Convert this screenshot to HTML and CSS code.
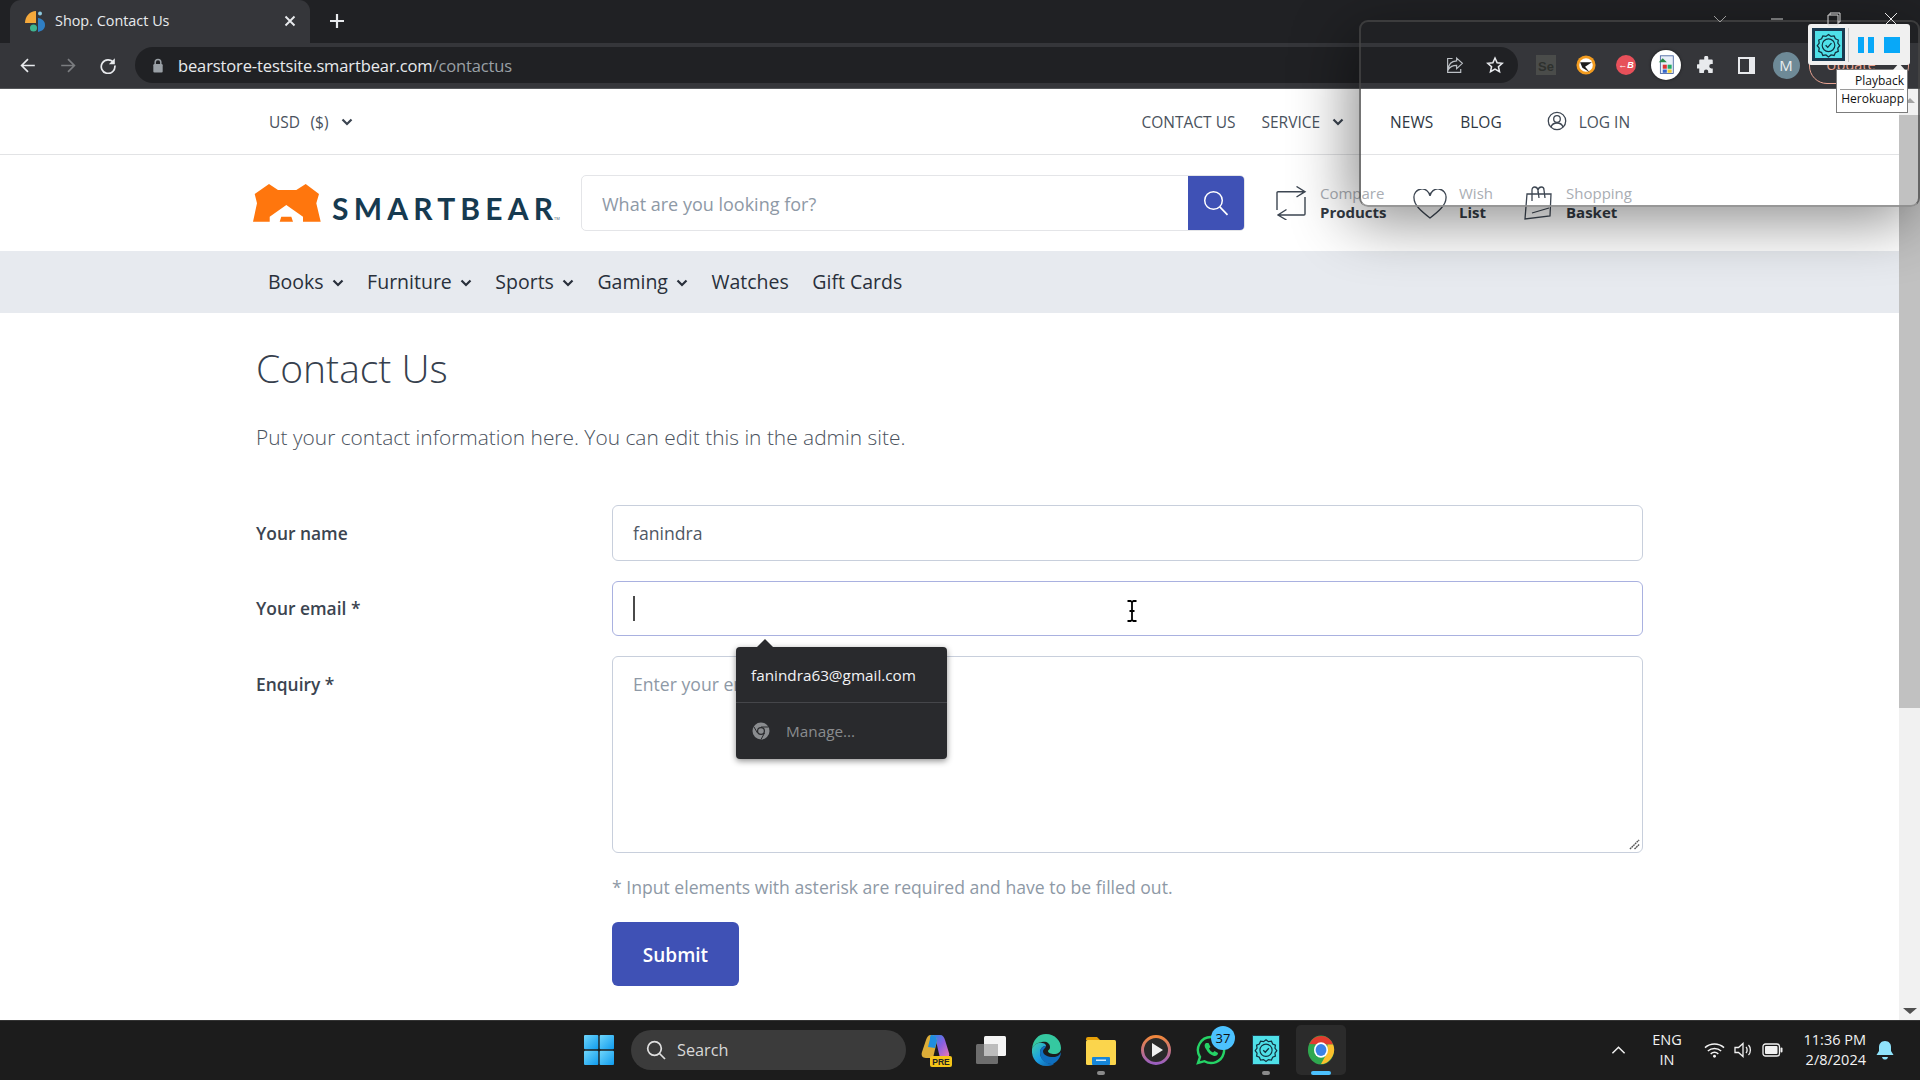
FILE: index.html
```html
<!DOCTYPE html>
<html lang="en">
<head>
<meta charset="utf-8">
<title>Shop. Contact Us</title>
<link rel="stylesheet" href="styles.css">
</head>
<body>
<svg class="defs" width="0" height="0" aria-hidden="true">
  <symbol id="chev" viewBox="0 0 12 8"><path d="M1.500 1.500 6 6l4.500-4.500" fill="none" stroke="currentColor" stroke-width="2.200"/></symbol>
  <symbol id="badge" viewBox="0 0 32 32">
    <path d="M16 3.500l3 2.300 3.700-.6 1.500 3.400 3.400 1.500-.6 3.700 2.300 3-2.300 3 .6 3.700-3.400 1.500-1.500 3.400-3.700-.6-3 2.300-3-2.300-3.700.6-1.500-3.400-3.400-1.500.6-3.700-2.300-3 2.300-3-.6-3.700 3.400-1.500 1.500-3.400 3.700.6z" fill="none" stroke="#12313f" stroke-width="1.500"/>
    <circle cx="16" cy="16.300" r="7.500" fill="none" stroke="#12313f" stroke-width="1.400"/>
    <path d="M12.600 16.300l2.500 2.500 4.400-5" fill="none" stroke="#12313f" stroke-width="1.600"/>
  </symbol>
</svg>
<div class="screen">
  <div class="tabstrip">
    <div class="tab">
      <svg class="favicon" viewBox="0 0 20 22"><path d="M0 13C0 6 5 1 11 1v12z" fill="#f5a93b"/><path d="M13 8c4 .5 7 3 7 7s-3 6-7 7z" fill="#2f7fc4"/><circle cx="8.500" cy="18" r="3.500" fill="#3fb58f"/><circle cx="15" cy="3.500" r="2" fill="#8ecbe0"/></svg>
      <span class="tab-title">Shop. Contact Us</span>
      <svg class="tab-x" viewBox="0 0 12 12"><path d="M1.500 1.500l9 9m0-9l-9 9" stroke="#e8eaed" stroke-width="1.900"/></svg>
    </div>
    <svg class="tab-plus" viewBox="0 0 16 16"><path d="M8 1v14M1 8h14" stroke="#e8eaed" stroke-width="2.200"/></svg>
  </div>
  <div class="toolbar">
    <svg class="tb-btn" viewBox="0 0 20 20"><path d="M18 10H3M10 2.500 2.500 10l7.500 7.500" fill="none" stroke="#e8eaed" stroke-width="2"/></svg>
    <svg class="tb-btn" viewBox="0 0 20 20"><path d="M2 10h15M10 2.500 17.500 10 10 17.500" fill="none" stroke="#7b7d80" stroke-width="2"/></svg>
    <svg class="tb-btn" viewBox="0 0 20 20"><path d="M16.500 6.500A8 8 0 1 0 18 10" fill="none" stroke="#e8eaed" stroke-width="2"/><path d="M18 1.500v7h-7z" fill="#e8eaed"/></svg>
    <div class="omnibox">
      <svg class="lock" viewBox="0 0 12 16"><path d="M3 7V4.500a3 3 0 0 1 6 0V7" fill="none" stroke="#9aa0a6" stroke-width="1.600"/><rect x="1" y="6.500" width="10" height="9" rx="1.200" fill="#9aa0a6"/></svg>
      <span class="url">bearstore-testsite.smartbear.com<span class="url-path">/contactus</span></span>
      <svg class="omni-icon" viewBox="0 0 22 22"><path d="M13 2.500l7 6.500-7 6.500v-4c-5 0-8 1.500-10 5 0-6 3-10 10-10.500zM8 3H2v17h16v-4" fill="none" stroke="#bdc1c6" stroke-width="1.400"/></svg>
      <svg class="omni-icon star" viewBox="0 0 22 22"><path d="M11 2.500l2.600 5.700 6.200.7-4.600 4.200 1.300 6.100-5.500-3.100-5.500 3.100 1.300-6.100-4.600-4.200 6.200-.7z" fill="none" stroke="#e8eaed" stroke-width="1.900"/></svg>
    </div>
    <div class="ext-slot ext-first"><div class="ext-se">Se</div></div>
    <div class="ext-slot"><svg class="ext-round" viewBox="0 0 22 22"><circle cx="11" cy="11" r="10.500" fill="#f39c1f"/><circle cx="11" cy="11" r="7.500" fill="#fff"/><path d="M4.500 8h13L10 13l5 6-8-5z" fill="#1d1d1d"/></svg></div>
    <div class="ext-slot"><div class="ext-red">&#8592;B</div></div>
    <div class="ext-slot"><div class="ext-white"><svg viewBox="0 0 22 26" width="18" height="21"><rect x="4" y="1" width="16" height="22" fill="#e8eef8" stroke="#3c5a9a"/><rect x="7" y="12" width="5" height="5" fill="#d33"/><rect x="13" y="12" width="5" height="5" fill="#2a6"/><rect x="7" y="18" width="5" height="4" fill="#36c"/><rect x="13" y="18" width="5" height="4" fill="#ec3"/><path d="M2 9l5-5 5 5z" fill="#2a8a4a"/></svg></div></div>
    <div class="ext-slot"><svg class="puzzle" viewBox="0 0 20 20"><path d="M8 1.500a2.300 2.300 0 0 1 4.500 0V4h4a1 1 0 0 1 1 1v4h-1.500a2.400 2.400 0 0 0 0 4.800h1.500V18a1 1 0 0 1-1 1h-4v-1.500a2.400 2.400 0 0 0-4.800 0V19H3.500a1 1 0 0 1-1-1v-4H1a2.400 2.400 0 0 1 0-4.800h1.500V5a1 1 0 0 1 1-1H8z" fill="#e8eaed"/></svg></div>
    <div class="ext-slot"><div class="sidepanel"></div></div>
    <div class="ext-slot"><div class="avatar">M</div></div>
    <div class="update-pill">Update</div>
  </div>
  <div class="page">
    <div class="page-main">
      <div class="topbar">
        <span class="top-link usd">USD &nbsp;($)</span>
        <svg class="chev-s"><use href="#chev"/></svg>
        <span class="top-link contact">CONTACT US</span>
        <span class="top-link service">SERVICE</span>
        <svg class="chev-s"><use href="#chev"/></svg>
        <span class="top-strong news">NEWS</span>
        <span class="top-strong blog">BLOG</span>
        <svg class="user-icon" viewBox="0 0 20 20"><circle cx="10" cy="10" r="8.700" fill="none" stroke="#3d4652" stroke-width="1.300"/><circle cx="10" cy="8" r="3.300" fill="none" stroke="#3d4652" stroke-width="1.300"/><path d="M4 16c1-3 3-4 6-4s5 1 6 4" fill="none" stroke="#3d4652" stroke-width="1.300"/></svg>
        <span class="top-link">LOG IN</span>
      </div>
      <div class="header">
        <div class="logo">
          <svg class="bear" viewBox="0 0 68 38"><path d="M0 37.700 4 19.300 1.700 10 16 0l9 6h18.300l9.400-6L66 10l-2.700 9.300 4.400 18.400H50v-5L33.300 21 16.700 32.700v5z" fill="#ff760d"/><path d="M26.700 37.700l1.600-5h10l1.700 5z" fill="#ff760d"/></svg>
          <span class="logo-text">SMARTBEA<span class="logo-last">R</span></span><span class="logo-tm">TM</span>
        </div>
        <div class="search">
          <span class="search-ph">What are you looking for?</span>
          <div class="search-btn"><svg viewBox="0 0 26 26" width="26" height="26"><circle cx="10.500" cy="10.500" r="8.800" fill="none" stroke="#fff" stroke-width="1.500"/><path d="M16.800 16.800l7.700 8" stroke="#fff" stroke-width="1.700"/></svg></div>
        </div>
        <div class="hitem compare">
          <svg class="hicon-c" viewBox="0 0 31 34"><path d="M29 5.700H2a1 1 0 0 0-1 1V24M2 29h26a1 1 0 0 0 1-1V11M20.500 .5l8.500 5.200-8.500 5.300M10.500 23.500 2 29l8.500 5" fill="none" stroke="#3d4652" stroke-width="1.400"/></svg>
          <div class="htext"><span class="hlight">Compare</span><span class="hbold">Products</span></div>
        </div>
        <div class="hitem wish">
          <svg class="hicon-w" viewBox="0 0 34 30"><path d="M17 29C8 22 1 16 1 9a7.800 7.800 0 0 1 16-2 7.800 7.800 0 0 1 16 2c0 7-7 13-16 20z" fill="none" stroke="#3d4652" stroke-width="1.300"/></svg>
          <div class="htext"><span class="hlight">Wish</span><span class="hbold">List</span></div>
        </div>
        <div class="hitem basket">
          <svg class="hicon-b" viewBox="0 0 28 34"><path d="M3 8h24l-1 22L1 33zM8 15V4c0-4 5-4 6 0l1 8M14 7V4c1-4 6-4 6 0l1 8M8 27l17-5" fill="none" stroke="#3d4652" stroke-width="1.300"/></svg>
          <div class="htext"><span class="hlight">Shopping</span><span class="hbold">Basket</span></div>
        </div>
      </div>
      <div class="nav">
        <span class="nav-item">Books<svg class="chev-n"><use href="#chev"/></svg></span>
        <span class="nav-item">Furniture<svg class="chev-n"><use href="#chev"/></svg></span>
        <span class="nav-item">Sports<svg class="chev-n"><use href="#chev"/></svg></span>
        <span class="nav-item">Gaming<svg class="chev-n"><use href="#chev"/></svg></span>
        <span class="nav-item">Watches</span>
        <span class="nav-item">Gift Cards</span>
      </div>
      <div class="main">
        <h1 class="title">Contact Us</h1>
        <p class="lead">Put your contact information here. You can edit this in the admin site.</p>
        <div class="form">
          <label class="label">Your name</label>
          <div class="field name-field">fanindra</div>
          <label class="label label-email">Your email *</label>
          <div class="field email-field"><span class="caret"></span></div>
          <label class="label label-top">Enquiry *</label>
          <div class="field area">
            <span class="placeholder">Enter your enquiry.</span>
            <svg class="grip" viewBox="0 0 12 12"><path d="M1 11 11 1M6 11l5-5" stroke="#555" stroke-width="1.500" stroke-dasharray="2 .6"/></svg>
          </div>
          <div class="form-spacer"></div>
          <div class="after">
            <p class="hint">* Input elements with asterisk are required and have to be filled out.</p>
            <button class="submit" type="button">Submit</button>
          </div>
        </div>
      </div>
    </div>
    <div class="scrollbar">
      <div class="arrow-up"></div>
      <div class="thumb"></div>
      <div class="sb-fill"></div>
      <div class="arrow-down"></div>
    </div>
  </div>
  <div class="taskbar">
    <svg class="start" viewBox="0 0 30 30"><defs><linearGradient id="win" x1="0" y1="0" x2="1" y2="1"><stop offset="0" stop-color="#6fd6fb"/><stop offset="1" stop-color="#0f9bee"/></linearGradient></defs><rect width="14.300" height="14.300" rx="1" fill="url(#win)"/><rect x="15.700" width="14.300" height="14.300" rx="1" fill="url(#win)"/><rect y="15.700" width="14.300" height="14.300" rx="1" fill="url(#win)"/><rect x="15.700" y="15.700" width="14.300" height="14.300" rx="1" fill="url(#win)"/></svg>
    <div class="tb-search">
      <svg viewBox="0 0 20 20" width="20" height="20"><circle cx="8.500" cy="8.500" r="6.800" fill="none" stroke="#e0e0e0" stroke-width="1.700"/><path d="M13.500 13.500 19 19" stroke="#e0e0e0" stroke-width="1.700"/></svg>
      <span>Search</span>
    </div>
    <div class="apps">
      <div class="app"><svg viewBox="0 0 32 34" width="32" height="34"><defs><linearGradient id="cp" x1="0" y1="0" x2="1" y2="1"><stop offset="0" stop-color="#1a8fe8"/><stop offset=".5" stop-color="#8a5fe0"/><stop offset="1" stop-color="#f27ab0"/></linearGradient></defs><path d="M11 2h9c3 0 4 2 5 5l4 13c1 3-1 5-4 5h-5l-4-17C15 4 13 3 11 2z" fill="url(#cp)"/><path d="M11 2c-3 0-4 2-5 5L2 19c-1 3 0 6 4 6h7l4-17c0-3-3-6-6-6z" fill="#e8b53a" opacity=".95"/><path d="M11 2c3 0 6 2 6 6l-2 7-7-1 2-8c0-2 0-3 1-4z" fill="#1f8ee0"/><rect x="10" y="23" width="22" height="11" rx="2" fill="#f5c518"/><text x="21" y="32" class="pre">PRE</text></svg></div>
      <div class="app"><svg viewBox="0 0 30 28" width="30" height="28"><rect x="8" y="0" width="22" height="20" rx="1.500" fill="#f4f4f4"/><rect x="0" y="8" width="22" height="20" rx="1.500" fill="#777" opacity=".9"/><rect x="8" y="8" width="14" height="12" fill="#bcbcbc"/></svg></div>
      <div class="app"><svg viewBox="0 0 30 32" width="30" height="32"><defs><linearGradient id="edge" x1="0" y1="0" x2="1" y2="1"><stop offset="0" stop-color="#3fd0a5"/><stop offset=".5" stop-color="#1b9de2"/><stop offset="1" stop-color="#0c59a4"/></linearGradient></defs><path d="M15 0c9 0 15 7 15 14 0 4-3 6-7 6-3 0-6-1-6-3 0-1 2-1 2-4 0-4-4-6-8-5C5 9 2 12 1 15 2 6 7 0 15 0z" fill="#35c8a0"/><path d="M1 15c1-3 5-7 10-6 2 0 4 1 4 3-4 0-6 3-6 7 0 5 5 10 11 11 1 0 2 0 3 0-3 2-5 2-8 2C7 32 0 25 1 15z" fill="url(#edge)"/><path d="M30 18c0 5-4 10-8 12-7 1-13-5-13-11 0-4 2-7 6-7 0 2-3 3-3 5 0 4 5 6 10 6 4 0 7-2 8-5z" fill="#0f6fbf"/></svg></div>
      <div class="app"><svg viewBox="0 0 30 30" width="30" height="30"><path d="M0 4a2 2 0 0 1 2-2h9l3 3h-14z" fill="#e6a008"/><rect y="5" width="30" height="25" rx="1.500" fill="#fbd54c"/><rect x="6" y="22" width="18" height="8" rx="1" fill="#1585d8"/><rect x="10" y="24.500" width="10" height="1.500" fill="#cfe9fb"/></svg><span class="dot"></span></div>
      <div class="app"><svg viewBox="0 0 30 30" width="30" height="30"><defs><linearGradient id="mp" x1="0" y1="0" x2="0" y2="1"><stop offset="0" stop-color="#f0873c"/><stop offset="1" stop-color="#9a5fc0"/></linearGradient></defs><circle cx="15" cy="15" r="13.500" fill="#2a2a2a" stroke="url(#mp)" stroke-width="3"/><path d="M11 8l11 7-11 7z" fill="#f2f2f2"/></svg></div>
      <div class="app"><svg viewBox="0 0 30 30" width="30" height="30"><path d="M15 2A13 13 0 0 0 4 22L2 28l6.500-1.800A13 13 0 1 0 15 2z" fill="none" stroke="#25d366" stroke-width="2.400"/><path d="M10 8c-1.500 1-2 3 0 6 2 4 5 6 8 7 2 .5 4-1 4-3l-3.500-2-1.500 1.500c-2-1-3-2-4-4l1.500-1.500L12.500 8z" fill="#25d366"/></svg><span class="count">37</span></div>
      <div class="app"><div class="teal-app"><svg viewBox="0 0 32 32" width="26" height="26"><use href="#badge"/></svg></div><span class="dot"></span></div>
      <div class="app app-active"><svg viewBox="0 0 30 32" width="28" height="30"><ellipse cx="15" cy="16" rx="14" ry="15.500" fill="#2fa84f"/><path d="M2.500 9.500A14 15 0 0 1 28 10H15z" fill="#e33b2e"/><path d="M28 10c2.500 6 1 13-5 18-2 2-5 3-8 3l6-11 1-10z" fill="#fbc02d"/><ellipse cx="15" cy="16" rx="7.500" ry="8.300" fill="#fff"/><ellipse cx="15" cy="16" rx="5.800" ry="6.500" fill="#3b82e6"/></svg><span class="active-bar"></span></div>
    </div>
    <div class="tray">
      <svg class="tray-caret" viewBox="0 0 16 10"><path d="M1.500 8.500 8 2l6.500 6.500" fill="none" stroke="#f2f2f2" stroke-width="1.600"/></svg>
      <div class="lang">ENG<br>IN</div>
      <svg class="tray-wifi" viewBox="0 0 22 16"><path d="M1 5.500c6-5 14-5 20 0M4 9c4-3.500 10-3.500 14 0M7 12c2.500-2 5.500-2 8 0" fill="none" stroke="#f2f2f2" stroke-width="1.500"/><circle cx="11" cy="14.500" r="1.500" fill="#f2f2f2"/></svg>
      <svg class="tray-vol" viewBox="0 0 20 16"><path d="M1 5.500h3.500L9 1.500v13l-4.500-4H1z" fill="none" stroke="#f2f2f2" stroke-width="1.300"/><path d="M12 5c1.500 1.500 1.500 4.500 0 6M14.500 3c2.500 2.500 2.500 7.500 0 10" fill="none" stroke="#f2f2f2" stroke-width="1.300"/></svg>
      <svg class="tray-bat" viewBox="0 0 21 14"><rect x="1" y="1" width="16.500" height="12" rx="2.500" fill="none" stroke="#f2f2f2" stroke-width="1.300"/><rect x="3" y="3" width="12.500" height="8" rx="1" fill="#f2f2f2"/><rect x="18.500" y="4.500" width="2" height="5" rx="1" fill="#f2f2f2"/></svg>
      <div class="clock">11:36 PM<br>2/8/2024</div>
      <svg class="tray-bell" viewBox="0 0 18 20"><path d="M9 1c4 0 6 3 6 6v4l2.500 4H.5L3 11V7c0-3 2-6 6-6z" fill="#8fe3fb"/><path d="M6 17h6c-.5 2-1.500 2.500-3 2.500S6.500 19 6 17z" fill="#8fe3fb"/></svg>
    </div>
  </div>

  <div class="overlay-window"></div>
  <div class="recorder">
    <div class="rec-icon"><svg viewBox="0 0 32 32" width="30" height="30"><use href="#badge"/></svg></div>
    <div class="rec-sep"></div>
    <div class="rec-pause"></div>
    <div class="rec-stop"></div>
  </div>
  <div class="rec-tip">
    <div class="rec-tip-line">Playback</div>
    <div class="rec-tip-line">Herokuapp</div>
  </div>
  <div class="win-controls">
    <svg viewBox="0 0 14 14" width="14" height="14"><path d="M1 4l6 6 6-6" fill="none" stroke="#9a9a9a"/></svg>
    <svg viewBox="0 0 14 14" width="14" height="14"><path d="M1 7h12" stroke="#c8c8c8"/></svg>
    <svg viewBox="0 0 14 14" width="14" height="14"><path d="M3 3V1h10v9h-2M1 3h10v10H1z" fill="none" stroke="#d8d8d8"/></svg>
    <svg viewBox="0 0 14 14" width="14" height="14"><path d="M1 1l12 12M13 1 1 13" stroke="#e8e8e8"/></svg>
  </div>
  <div class="autofill">
    <div class="af-arrow"></div>
    <div class="af-email">fanindra63@gmail.com</div>
    <div class="af-div"></div>
    <div class="af-manage">
      <svg viewBox="0 0 18 18" width="18" height="18"><circle cx="9" cy="9" r="8.500" fill="#8a8c8f"/><circle cx="9" cy="9" r="4" fill="#292a2d"/><circle cx="9" cy="9" r="2.800" fill="#8a8c8f"/><path d="M9 5h7.500M5.500 11 2 5M12.500 11 9 17.500" stroke="#292a2d" stroke-width="1"/></svg>
      <span>Manage...</span>
    </div>
  </div>
  <svg class="ibeam" viewBox="0 0 12 22"><path d="M1.500 1h3l1.500 1 1.500-1h3M1.500 21h3l1.500-1 1.500 1h3M6 2v18M3.500 11h5" fill="none" stroke="#000" stroke-width="1.800"/></svg>
</div>
</body>
</html>
```
FILE: styles.css
```css
* { box-sizing: border-box; }
html, body { margin: 0; padding: 0; overflow: hidden; background: #fff; }
body { font-family: "Open Sans", "Noto Sans", sans-serif; color: #3b4450; }
.defs { position: absolute; }
.screen { position: relative; width: 1920px; height: 1080px; display: flex; flex-direction: column; overflow: hidden; }

/* browser chrome */
.tabstrip { height: 43px; background: #202124; display: flex; align-items: flex-end; padding-left: 10px; flex: none; }
.tab { width: 300px; height: 43px; background: #35363a; border-radius: 11px 11px 0 0; display: flex; align-items: center; padding: 0 14px 2px 15px; }
.favicon { width: 20px; height: 22px; flex: none; }
.tab-title { margin-left: 10px; font: 14.400px "Open Sans", sans-serif; color: #e8eaed; flex: 1; white-space: nowrap; }
.tab-x { width: 12px; height: 12px; }
.tab-plus { width: 16px; height: 16px; margin: 0 0 14px 19px; }
.toolbar { height: 46px; background: #35363a; border-bottom: 1px solid #55575a; display: flex; align-items: center; padding: 0 0 1px 18px; flex: none; position: relative; }
.tb-btn { width: 20px; height: 17px; margin-right: 20px; flex: none; }
.omnibox { width: 1383px; height: 36px; margin-left: -3px; background: #202124; border-radius: 18px; display: flex; align-items: center; padding-left: 17px; }
.lock { width: 12px; height: 15px; flex: none; }
.url { margin-left: 14px; font: 16.500px "Open Sans", sans-serif; letter-spacing: -.12px; color: #e8eaed; flex: 1; white-space: nowrap; }
.url-path { color: #9aa0a6; }
.omni-icon { width: 20px; height: 18px; margin-right: 20px; flex: none; }
.omni-icon.star { margin-right: 13px; }
.ext-slot { width: 40px; display: flex; justify-content: center; flex: none; }
.ext-first { margin-left: 8px; }
.ext-se { width: 20px; height: 20px; background: #4a4c4a; color: #2e312e; font: 700 13px/24px "Liberation Sans", sans-serif; text-align: center; overflow: hidden; }
.ext-round { width: 20px; height: 20px; }
.ext-red { width: 20px; height: 20px; border-radius: 50%; background: #e7505a; color: #fff; font: italic 700 9px/20px "Liberation Sans", sans-serif; text-align: center; white-space: nowrap; overflow: hidden; }
.ext-white { width: 30px; height: 30px; border-radius: 50%; background: #fff; display: flex; align-items: center; justify-content: center; box-shadow: 0 0 3px rgba(0,0,0,.6); }
.puzzle { width: 18px; height: 18px; }
.sidepanel { width: 17px; height: 17px; border: 2px solid #e8eaed; border-right-width: 6px; background: #35363a; }
.avatar { width: 27px; height: 27px; border-radius: 50%; background: #6e8a97; color: #e9eef0; font: 15px/27px "Open Sans", sans-serif; text-align: center; }
.update-pill { margin-left: 3px; width: 100px; height: 37px; border: 1.500px solid #e8a392; border-radius: 18px; color: #e8a392; font: 14.500px/34px "Open Sans", sans-serif; padding-left: 16px; }

/* page */
.page { flex: 1; display: flex; min-height: 0; }
.page-main { flex: 1; min-width: 0; display: flex; flex-direction: column; }
.topbar { height: 66px; flex: none; border-bottom: 1px solid #e2e3e5; display: flex; align-items: center; padding-left: 269px; font-size: 15.500px; }
.top-link { color: #4a525d; white-space: nowrap; }
.usd { word-spacing: 1.200px; }
.top-strong { color: #2f3742; font-weight: 500; white-space: nowrap; }
.chev-s { width: 12px; height: 8px; margin-left: 12px; color: #3b4450; flex: none; }
.contact { margin-left: 789px; }
.service { margin-left: 26px; }
.news { margin-left: 46px; }
.blog { margin-left: 27px; }
.user-icon { width: 20px; height: 20px; margin: -2px 12px 0 45px; flex: none; }

.header { height: 96px; flex: none; display: flex; align-items: center; padding-left: 253px; }
.logo { width: 328px; flex: none; display: flex; align-items: flex-end; height: 38px; }
.bear { width: 68px; height: 38px; flex: none; }
.logo-text { margin: 0 0 -1px 11px; font: 700 30px/30px Lato, sans-serif; letter-spacing: 5.200px; color: #163a50; white-space: nowrap; }
.logo-last { letter-spacing: 0; }
.logo-tm { font: 4px/6px "Open Sans", sans-serif; color: #4a6070; margin-left: 1px; }
.search { width: 664px; height: 56px; flex: none; border: 1px solid #e4e5e8; border-radius: 5px; display: flex; align-items: center; overflow: hidden; padding-left: 20px; }
.search-ph { flex: 1; font-size: 18px; color: #8e99a6; padding-top: 1px; }
.search-btn { width: 56px; height: 56px; background: #3f51b5; display: flex; align-items: center; justify-content: center; flex: none; }
.hitem { display: flex; align-items: center; flex: none; }
.compare { width: 137px; margin-left: 31px; }
.wish { width: 111px; }
.basket { width: 120px; }
.hicon-c { width: 31px; height: 34px; margin-right: 13px; flex: none; }
.hicon-w { width: 34px; height: 30px; margin-right: 12px; margin-top: 2px; flex: none; }
.hicon-b { width: 28px; height: 34px; margin-right: 14px; flex: none; }
.htext { display: flex; flex-direction: column; font-size: 15px; line-height: 19.500px; }
.hlight { color: #a9adb3; }
.hbold { color: #333a44; font-weight: 700; }

.nav { height: 62px; flex: none; background: #e7eaef; display: flex; align-items: center; padding: 0 0 2px 268px; gap: 23.500px; }
.nav-item { font-size: 19.500px; color: #29303b; display: flex; align-items: center; white-space: nowrap; }
.chev-n { width: 12px; height: 8px; margin: 3px 0 0 8px; color: #29303b; flex: none; }

.main { padding: 30px 0 0 256px; flex: 1; }
.title { margin: 0; font-size: 39px; line-height: 50px; font-weight: 300; color: #36404d; }
.lead { margin: 26px 0 0; font-size: 20.900px; line-height: 36px; font-weight: 300; color: #4a525d; }
.form { margin-top: 50px; width: 1387px; display: grid; grid-template-columns: 356px 1031px; row-gap: 20px; }
.label { font-size: 17.400px; font-weight: 600; color: #3b4450; align-self: center; }
.label-email { padding-bottom: 2px; }
.label-top { align-self: start; line-height: 56px; }
.field { border: 1px solid #c8cfdc; border-radius: 6px; display: flex; align-items: center; padding-left: 20px; font-size: 17.600px; color: #4f5864; background: #fff; }
.name-field { height: 56px; }
.email-field { height: 55px; border-color: #a9b1e0; }
.caret { width: 2px; height: 25px; background: #4a4a4a; }
.area { height: 197px; position: relative; align-items: flex-start; padding-top: 14px; line-height: 27px; }
.placeholder { color: #8e99a6; }
.grip { position: absolute; right: 2px; bottom: 2px; width: 11px; height: 11px; }
.after { margin-top: -1px; }
.hint { margin: 0; font-size: 17.600px; line-height: 30px; color: #8e99a6; }
.submit { display: block; margin: 20px 0 0; padding: 2px 0 0; width: 127px; height: 64px; background: #3f51b5; color: #fff; border: 0; border-radius: 6px; font: 600 19px "Open Sans", sans-serif; }

.scrollbar { width: 21px; flex: none; background: #f1f1f1; display: flex; flex-direction: column; align-items: center; }
.arrow-up { margin-top: 9px; width: 0; height: 0; border: 5px solid transparent; border-top: 0; border-bottom: 5px solid #a3a3a3; }
.thumb { margin-top: 12px; width: 100%; height: 593px; background: #c1c1c1; }
.sb-fill { flex: 1; }
.arrow-down { margin-bottom: 6px; width: 0; height: 0; border: 7px solid transparent; border-bottom: 0; border-top: 6px solid #505050; }

/* taskbar */
.taskbar { height: 60px; flex: none; background: #1c1c1c; border-top: 1px solid #333; display: flex; align-items: center; padding: 0 0 1px 584px; color: #f2f2f2; }
.start { width: 30px; height: 30px; flex: none; }
.tb-search { width: 275px; height: 40px; margin-left: 17px; background: #3b3b3b; border-radius: 20px; display: flex; align-items: center; padding-left: 15px; font-size: 16.300px; color: #d8d8d8; flex: none; }
.tb-search span { margin-left: 11px; }
.apps { display: flex; margin-left: 2px; flex: none; }
.app { width: 55px; height: 50px; display: flex; align-items: center; justify-content: center; position: relative; flex: none; }
.app-active { width: 50px; background: #2b2b2b; border-radius: 5px; margin-left: 3px; }
.pre { font: 700 8.500px "Liberation Sans", sans-serif; fill: #222; text-anchor: middle; }
.dot { position: absolute; bottom: 0; left: 50%; margin-left: -4px; width: 8px; height: 4px; border-radius: 2px; background: #8a8a8a; }
.active-bar { position: absolute; bottom: 0; left: 50%; margin-left: -10px; width: 20px; height: 4px; border-radius: 2px; background: #4cc2ff; }
.count { position: absolute; top: 1px; left: 28px; width: 24px; height: 24px; border-radius: 50%; background: #4cc2ff; color: #111; font-size: 13px; line-height: 24px; text-align: center; }
.teal-app { width: 28px; height: 30px; background: #4fe0e8; border: 1px solid #1e3a4a; display: flex; align-items: center; justify-content: center; }
.tray { margin-left: auto; display: flex; align-items: center; flex: none; font-size: 14.500px; line-height: 20px; }
.tray-caret { width: 15px; height: 10px; margin-right: 19px; }
.lang { width: 44px; text-align: center; margin-right: 15px; }
.tray-wifi { width: 21px; height: 16px; margin-right: 9px; }
.tray-vol { width: 20px; height: 16px; margin-right: 8px; }
.tray-bat { width: 21px; height: 14px; margin-right: 11px; }
.clock { text-align: right; width: 72px; margin-right: 10px; }
.tray-bell { width: 18px; height: 20px; margin-right: 26px; }

/* floating layers */
.overlay-window { position: absolute; left: 1359px; top: 20px; width: 561px; height: 187px; border: 2px solid rgba(70,70,70,.75); border-bottom-color: rgba(140,140,140,.9); border-radius: 9px; box-shadow: -8px 14px 60px rgba(0,0,0,.45); }
.win-controls { position: absolute; top: 12px; left: 1713px; display: flex; gap: 43px; }
.recorder { position: absolute; left: 1808px; top: 24px; width: 102px; height: 41px; background: #f0f0f0; border-radius: 3px; display: flex; align-items: center; padding-left: 4px; }
.rec-icon { width: 33px; height: 33px; background: #4fe0e8; border: 3px solid #1a3a50; display: flex; align-items: center; justify-content: center; overflow: hidden; flex: none; }
.rec-sep { width: 1px; height: 34px; margin-left: 3px; background: #c4c4c4; flex: none; }
.rec-pause { margin-left: 9px; width: 16px; height: 16px; flex: none; border-left: 6px solid #08a8f8; border-right: 6px solid #08a8f8; }
.rec-stop { margin-left: 10px; width: 16px; height: 16px; background: #08a8f8; flex: none; }
.rec-tip { position: absolute; left: 1836px; top: 69px; width: 72px; height: 44px; background: #fff; border: 1px solid #7c7c7c; text-align: right; padding: 2px 3px 0; font: 12px/17px "Open Sans", sans-serif; color: #111; white-space: nowrap; }
.rec-tip-line + .rec-tip-line { border-top: 1px solid #9a9a9a; }
.rec-tip::before { content: ""; position: absolute; right: 2px; top: -7px; border: 6px solid transparent; border-top: 0; border-bottom: 7px solid #f0f0f0; }
.autofill { position: absolute; left: 736px; top: 647px; width: 211px; height: 112px; background: #292a2d; border-radius: 4px; box-shadow: 0 2px 6px rgba(0,0,0,.45); color: #e8eaed; font-size: 15.300px; display: flex; flex-direction: column; }
.af-arrow { position: absolute; left: 20px; top: -8px; width: 0; height: 0; border: 9px solid transparent; border-top: 0; border-bottom: 9px solid #292a2d; }
.af-email { height: 55px; padding: 0 0 0 15px; display: flex; align-items: center; white-space: nowrap; color: #f2f3f5; }
.af-div { height: 1px; background: #45464a; flex: none; }
.af-manage { flex: 1; display: flex; align-items: center; padding-left: 16px; color: #8a8c8f; }
.af-manage span { margin-left: 16px; }
.ibeam { position: absolute; left: 1126px; top: 600px; width: 12px; height: 22px; }
```
